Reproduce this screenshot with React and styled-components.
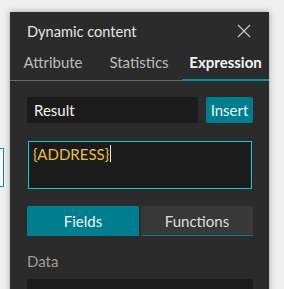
import React, { useState } from "react"
import styled, { createGlobalStyle } from "styled-components"

const Global = createGlobalStyle`
  html, body {
    margin: 0;
    padding: 0;
    background: #efefef;
    overflow: hidden;
  }
  * { box-sizing: border-box; }
`

const Page = styled.div`
  position: relative;
  width: 284px;
  height: 289px;
  padding: 12px 15px 0 10px;
  font-family: Lato, "Open Sans", sans-serif;
  overflow: hidden;
`

// a widget on the map canvas behind the panel
const BackdropBox = styled.div`
  position: absolute;
  left: -40px;
  top: 148px;
  width: 44px;
  height: 39px;
  background: #ffffff;
  border: 1px solid #0a8aa0;
`

const Panel = styled.div`
  position: relative;
  width: 259px;
  height: 300px;
  background: #2b2b2b;
  box-shadow: 0 0 6px rgba(0, 0, 0, 0.35);
  display: flex;
  flex-direction: column;
`

const Header = styled.div`
  display: flex;
  align-items: center;
  justify-content: space-between;
  height: 38px;
  padding: 0 18px 0 17px;
`

const Title = styled.h1`
  margin: 0;
  font-size: 14.6px;
  font-weight: 400;
  color: #e6e6e6;
`

const Close = styled.button`
  width: 14px;
  height: 14px;
  padding: 0;
  border: 0;
  background: none;
  display: flex;
  cursor: pointer;
`

const Tabs = styled.div`
  display: grid;
  grid-template-columns: 86px 86px 1fr;
  height: 31px;
  border-bottom: 1px solid #6a6a6a;
`

const Tab = styled.button`
  border: 0;
  background: none;
  padding: 0;
  font-family: inherit;
  font-size: 15px;
  font-weight: ${(p) => (p.$active ? 700 : 400)};
  color: ${(p) => (p.$active ? "#f4f4f4" : "#bcbcbc")};
  border-bottom: 2px solid ${(p) => (p.$active ? "#0093a6" : "transparent")};
  margin-bottom: -1px;
  padding-bottom: 6px;
  cursor: pointer;
`

const Body = styled.div`
  display: flex;
  flex-direction: column;
  padding: 16px 16px 0 17px;
`

const NameRow = styled.div`
  display: flex;
  gap: 8px;
  height: 26px;
`

const NameInput = styled.div`
  flex: 1;
  background: #1b1b1b;
  border-radius: 2px;
  color: #f2f2f2;
  font-size: 15px;
  display: flex;
  align-items: center;
  padding-left: 7px;
`

const Button = styled.button`
  width: 47px;
  border: 0;
  border-radius: 2px;
  background: #007d8e;
  color: #e8f4f6;
  font-family: inherit;
  font-size: 15px;
  padding: 0;
  cursor: pointer;
`

const Editor = styled.div`
  margin: 18px 0 0 1px;
  width: 224px;
  height: 48px;
  background: #1b1b1b;
  border: 1px solid #14c6dc;
  padding: 3px 0 0 4px;
  font-size: 15px;
  color: #ebbb4c;
  display: flex;
  align-items: flex-start;
`

const Caret = styled.span`
  display: inline-block;
  width: 1px;
  height: 17px;
  background: #f0f0f0;
  margin-left: 1px;
`

const Segmented = styled.div`
  margin-top: 17px;
  display: grid;
  grid-template-columns: 112px 112px;
  gap: 2px;
  height: 30px;
`

const Segment = styled.button`
  border: 0;
  border-radius: 2px 2px 0 0;
  background: ${(p) => (p.$active ? "#007d8e" : "#393939")};
  border-bottom: 1px solid #007d8e;
  color: ${(p) => (p.$active ? "#eef6f7" : "#dedede")};
  font-family: inherit;
  font-size: 15px;
  padding: 0;
  cursor: pointer;
`

const Label = styled.div`
  margin-top: 16px;
  font-size: 15px;
  color: #9c9c9c;
`

const Source = styled.div`
  margin-top: 9px;
  height: 30px;
  background: #1b1b1b;
  border-radius: 2px;
  color: #f2f2f2;
  font-size: 15px;
  padding: 6px 0 0 7px;
  white-space: nowrap;
  overflow: hidden;
`

const CloseIcon = () => (
  <svg width="14" height="14" viewBox="0 0 14 14">
    <path d="M1 1 L13 13 M13 1 L1 13" stroke="#c4c4c4" strokeWidth="1.3" fill="none" />
  </svg>
)

const App = () => {
  const [tab, setTab] = useState("Expression")
  const [mode, setMode] = useState("Fields")

  return (
    <>
      <Global />
      <Page>
        <BackdropBox />
        <Panel>
          <Header>
            <Title>Dynamic content</Title>
            <Close aria-label="Close">
              <CloseIcon />
            </Close>
          </Header>
          <Tabs>
            {["Attribute", "Statistics", "Expression"].map((t) => (
              <Tab key={t} $active={tab === t} onClick={() => setTab(t)}>
                {t}
              </Tab>
            ))}
          </Tabs>
          <Body>
            <NameRow>
              <NameInput>Result</NameInput>
              <Button>Insert</Button>
            </NameRow>
            <Editor>
              {"{ADDRESS}"}
              <Caret />
            </Editor>
            <Segmented>
              {["Fields", "Functions"].map((m) => (
                <Segment key={m} $active={mode === m} onClick={() => setMode(m)}>
                  {m}
                </Segment>
              ))}
            </Segmented>
            <Label>Data</Label>
            <Source>Feature layer - EsriWorld Boundaries</Source>
          </Body>
        </Panel>
      </Page>
    </>
  )
}

export default App
